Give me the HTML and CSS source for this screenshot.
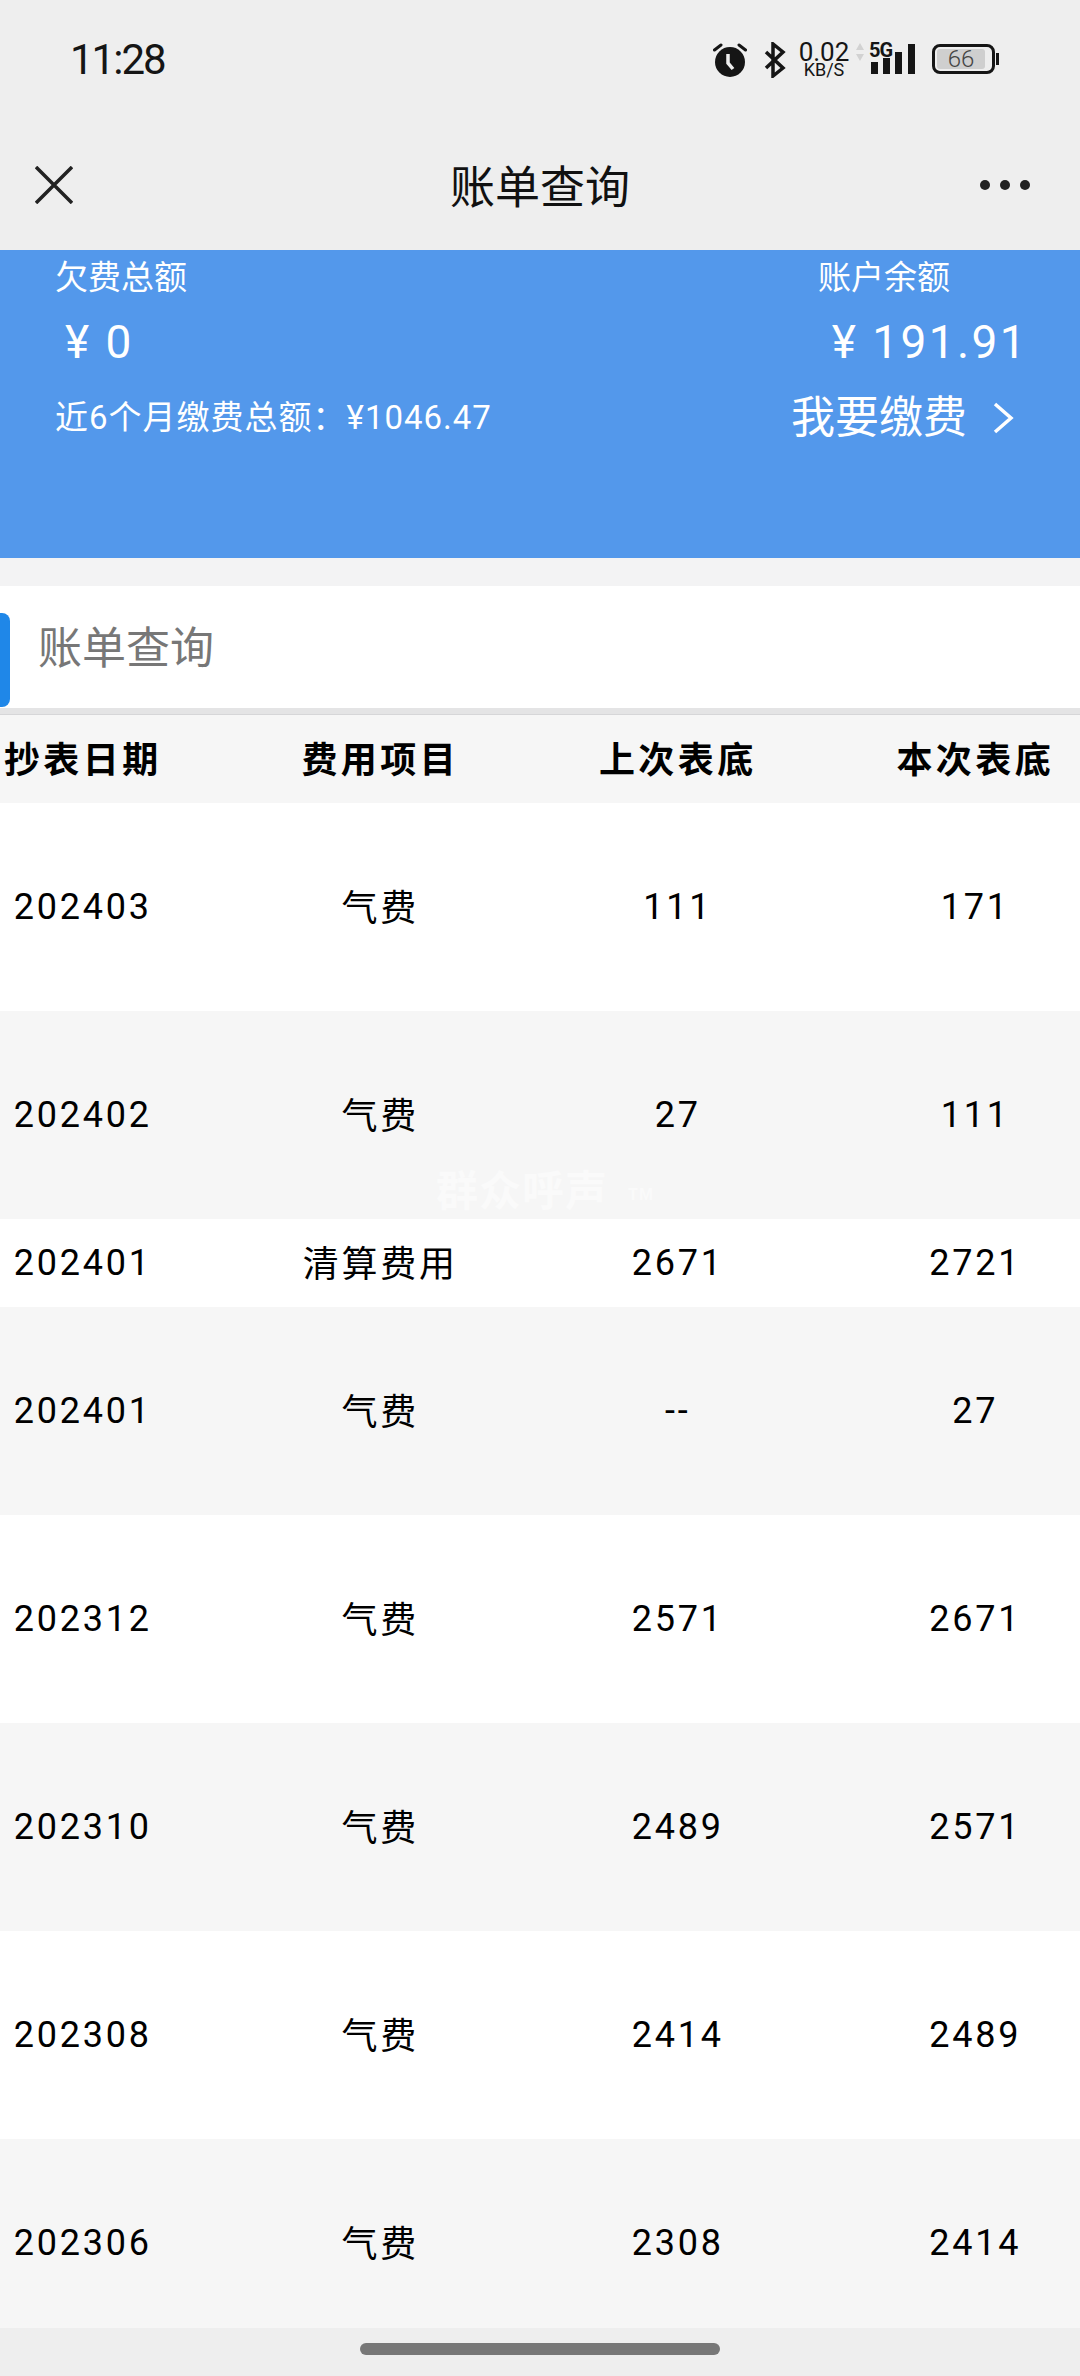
FILE: index.html
```html
<!DOCTYPE html>
<html>
<head>
    <meta charset="UTF-8">
    <meta name="viewport" content="width=device-width, initial-scale=1.0">
    <title>账单查询</title>
    <link rel="stylesheet" href="styles.css">
</head>
<body>
    <div class="status-bar">
        <span class="time">11:28</span>
        <div class="status-icons">
            <svg class="icon-alarm" width="34" height="36" viewBox="0 0 34 36">
                <circle cx="17" cy="20" r="15" fill="#151515"/>
                <path d="M1.500 8 8 3M32.500 8 26 3" stroke="#151515" stroke-width="3" stroke-linecap="round"/>
                <path d="M15 12v9l5 6" fill="none" stroke="#eee" stroke-width="3.500"/>
            </svg>
            <svg class="icon-bt" width="22" height="36" viewBox="0 0 22 36">
                <path d="M2 10 19 26 9 34V2l10 8L2 26" fill="none" stroke="#151515" stroke-width="3.500"/>
            </svg>
            <div class="speed">
                <span class="speed-num">0.02</span>
                <span class="speed-unit">KB/S</span>
            </div>
            <svg class="icon-updown" width="10" height="20" viewBox="0 0 10 20">
                <path d="M5 1 9 8H1zM5 19 9 12H1z" fill="#d2d2d2"/>
            </svg>
            <div class="signal">
                <span class="signal-label">5G</span>
                <svg width="44" height="32" viewBox="0 0 44 32">
                    <rect x="0" y="20" width="7" height="12" fill="#151515"/>
                    <rect x="12" y="16" width="7" height="16" fill="#151515"/>
                    <rect x="24" y="10" width="7" height="22" fill="#151515"/>
                    <rect x="37" y="2" width="7" height="30" fill="#151515"/>
                </svg>
            </div>
            <div class="battery">
                <div class="battery-body"><span class="battery-fill">66</span></div>
                <div class="battery-nub"></div>
            </div>
        </div>
    </div>
    <div class="nav-bar">
        <svg width="38" height="38" viewBox="0 0 38 38">
            <path d="M1 1 37 37M37 1 1 37" stroke="#222" stroke-width="3.500"/>
        </svg>
        <h1>账单查询</h1>
        <div class="more"><i></i><i></i><i></i></div>
    </div>
    <div class="summary">
        <div class="summary-row labels">
            <span>欠费总额</span>
            <span class="balance-label">账户余额</span>
        </div>
        <div class="summary-row amounts">
            <span class="owed">¥ 0</span>
            <span>¥ 191.91</span>
        </div>
        <div class="summary-row totals">
            <span class="total-text">近6个月缴费总额：¥1046.47</span>
            <span class="pay-link">我要缴费
                <svg width="22" height="32" viewBox="0 0 22 32">
                    <path d="M3 2 19 16 3 30" fill="none" stroke="#fff" stroke-width="3.500"/>
                </svg>
            </span>
        </div>
    </div>
    <div class="section-title">
        <div class="tab-mark"></div>
        <span>账单查询</span>
    </div>
    <div class="table-wrap">
        <span class="watermark">群众呼声<small>TM</small></span>
        <table>
            <thead>
                <tr>
                    <th>抄表日期</th>
                    <th>费用项目</th>
                    <th>上次表底</th>
                    <th>本次表底</th>
                </tr>
            </thead>
            <tbody>
                <tr><td>202403</td><td class="item">气费</td><td>111</td><td>171</td></tr>
                <tr class="grey"><td>202402</td><td class="item">气费</td><td>27</td><td>111</td></tr>
                <tr class="short"><td>202401</td><td class="item">清算费用</td><td>2671</td><td>2721</td></tr>
                <tr class="grey"><td>202401</td><td class="item">气费</td><td>--</td><td>27</td></tr>
                <tr><td>202312</td><td class="item">气费</td><td>2571</td><td>2671</td></tr>
                <tr class="grey"><td>202310</td><td class="item">气费</td><td>2489</td><td>2571</td></tr>
                <tr><td>202308</td><td class="item">气费</td><td>2414</td><td>2489</td></tr>
                <tr class="grey"><td>202306</td><td class="item">气费</td><td>2308</td><td>2414</td></tr>
            </tbody>
        </table>
    </div>
    <div class="home-bar"><div class="home-pill"></div></div>
</body>
</html>
```

FILE: styles.css
```css
* {
    box-sizing: border-box;
}
body {
    margin: 0;
    width: 1080px;
    height: 2376px;
    overflow: hidden;
    display: flex;
    flex-direction: column;
    background-color: #f3f3f4;
    color: #000;
    font-family: Roboto, "Noto Sans CJK SC", sans-serif;
}
.status-bar {
    height: 120px;
    flex: none;
    background-color: #eee;
    display: flex;
    justify-content: space-between;
    align-items: flex-start;
    padding: 42px 81px 0 70px;
}
.time {
    font-size: 42px;
    line-height: 36px;
    color: #151515;
    letter-spacing: -2px;
}
.status-icons {
    display: flex;
    align-items: flex-start;
    color: #151515;
}
.icon-bt {
    margin-left: 17px;
}
.speed {
    margin-left: 12px;
    width: 52px;
    display: flex;
    flex-direction: column;
    align-items: center;
}
.speed-num {
    font-size: 26px;
    line-height: 20px;
}
.speed-unit {
    font-size: 18px;
    line-height: 16px;
}
.icon-updown {
    margin: 0 4px 0 5px;
}
.signal {
    width: 46px;
    height: 34px;
    position: relative;
}
.signal svg {
    position: absolute;
    right: 0;
    top: 0;
}
.signal-label {
    position: absolute;
    left: 0;
    top: -1px;
    font-size: 20px;
    line-height: 18px;
    font-weight: 700;
    letter-spacing: -1px;
}
.battery {
    margin-left: 17px;
    margin-top: 2px;
    display: flex;
    align-items: center;
}
.battery-body {
    width: 63px;
    height: 30px;
    border: 3px solid #151515;
    border-radius: 8px;
    padding: 2px;
}
.battery-fill {
    display: block;
    width: 48px;
    height: 20px;
    border-radius: 3px;
    background-color: #cfcfcf;
    color: #444;
    font-size: 24px;
    line-height: 20px;
    font-weight: 300;
    text-align: center;
}
.battery-nub {
    width: 3px;
    height: 12px;
    background-color: #151515;
    margin-left: 1px;
}
.nav-bar {
    height: 130px;
    flex: none;
    background-color: #eee;
    display: flex;
    justify-content: space-between;
    align-items: center;
    padding: 0 50px 0 35px;
    position: relative;
}
.nav-bar h1 {
    position: absolute;
    left: 0;
    right: 0;
    top: 39px;
    margin: 0;
    font-size: 45px;
    line-height: 60px;
    font-weight: 400;
    text-align: center;
    color: #111;
}
.more {
    display: flex;
    gap: 10px;
}
.more i {
    width: 10px;
    height: 10px;
    border-radius: 50%;
    background-color: #222;
}
.summary {
    height: 308px;
    flex: none;
    background-color: #5398eb;
    color: #fff;
    padding: 0 52px 0 55px;
}
.summary-row {
    display: flex;
    justify-content: space-between;
}
.labels {
    font-size: 33px;
    line-height: 50px;
    height: 50px;
    padding-top: 3px;
}
.balance-label {
    margin-right: 78px;
}
.amounts {
    font-size: 46px;
    line-height: 60px;
    margin-top: 12px;
    letter-spacing: 2.400px;
}
.owed {
    margin-left: 10px;
}
.totals {
    margin-top: 16px;
    align-items: center;
}
.total-text {
    font-size: 33px;
    line-height: 60px;
    letter-spacing: 1px;
}
.pay-link {
    font-size: 44px;
    line-height: 60px;
    display: flex;
    align-items: center;
    gap: 25px;
    margin-right: 14px;
}
.section-title {
    margin-top: 28px;
    height: 128px;
    flex: none;
    background-color: #fff;
    border-bottom: 6px solid #e4e4e5;
    display: flex;
    align-items: center;
    position: relative;
    font-size: 44px;
    color: #777;
    padding: 0 0 4px 38px;
}
.tab-mark {
    position: absolute;
    left: 0;
    top: 27px;
    width: 10px;
    height: 94px;
    background-color: #1f87e8;
    border-radius: 0 8px 8px 0;
}
.table-wrap {
    flex: 1;
    overflow: hidden;
    position: relative;
    background-color: #fff;
    border-top: 1px solid #d6d6d8;
}
.watermark {
    position: absolute;
    left: 436px;
    top: 442px;
    z-index: 1;
    font-size: 42px;
    font-weight: 700;
    letter-spacing: 1px;
    color: #fafafa;
}
.watermark small {
    font-size: 16px;
    margin-left: 20px;
    vertical-align: middle;
}
table {
    width: 1190px;
    margin-left: -66px;
    border-collapse: collapse;
    table-layout: fixed;
}
th, td {
    padding: 0;
    text-align: center;
    font-size: 36px;
    letter-spacing: 2.800px;
}
th {
    height: 88px;
    padding-bottom: 5px;
    background-color: #f6f6f6;
    font-weight: 700;
    letter-spacing: 3.400px;
}
td {
    height: 208px;
}
td.item {
    padding-bottom: 4px;
}
.grey {
    background-color: #f6f6f6;
}
.short td {
    height: 88px;
}
.home-bar {
    height: 48px;
    flex: none;
    background-color: #eee;
    padding: 15px 360px 0;
}
.home-pill {
    height: 12px;
    border-radius: 6px;
    background-color: #777;
}
```
